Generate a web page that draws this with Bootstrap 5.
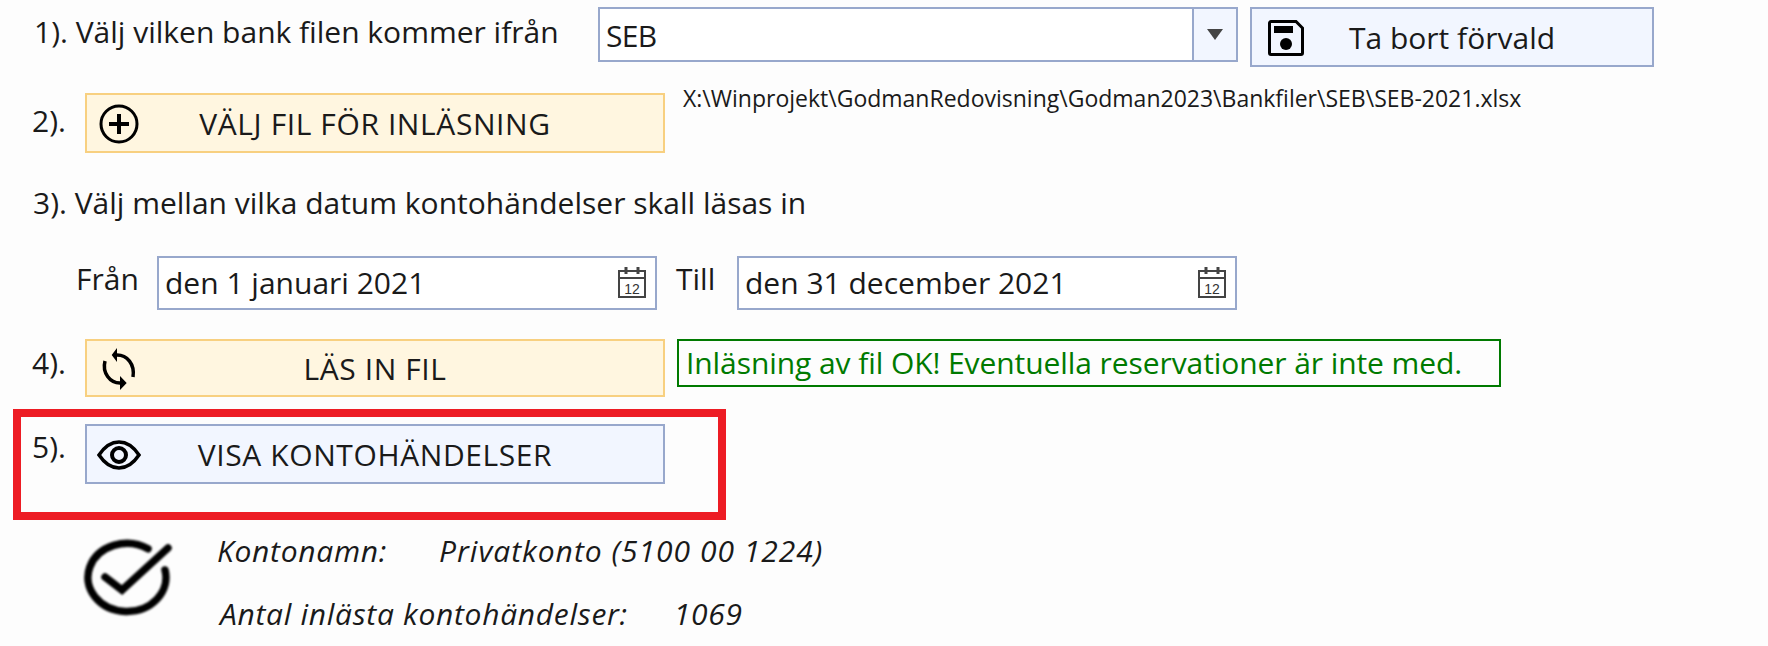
<!DOCTYPE html>
<html lang="sv">
<head>
    <meta charset="UTF-8">
    <meta name="viewport" content="width=device-width, initial-scale=1.0">
    <title>Inläsning av bankfil</title>
    <link href="https://cdn.jsdelivr.net/npm/bootstrap@5.3.3/dist/css/bootstrap.min.css" rel="stylesheet">
    <style>
        body {
            background-color: #fdfdfd;
            color: #1a1a1a;
            font-family: "Open Sans", "Liberation Sans", sans-serif;
            font-size: 30px;
            line-height: 36px;
            overflow: hidden;
        }
        .page-wrap { padding-top: 7px; width: 1768px; height: 646px; }

        .step-label { width: 85px; padding-left: 32px; flex: none; }
        .blue-box { border: 2px solid #98a8cc; border-radius: 0; }

        .action-btn {
            display: grid;
            grid-template-columns: 1fr auto 1fr;
            align-items: center;
            width: 580px;
            height: 60px;
            padding: 2px 12px 0;
            border-width: 2px;
            border-style: solid;
            border-radius: 0;
            font-size: 30px;
            line-height: 36px;
            color: #1a1a1a;
        }
        .action-btn svg { justify-self: start; display: block; margin-left: -2px; }
        .btn-yellow { background-color: #fff6e0; border-color: #f8d080; }
        .btn-blue { background-color: #f2f6ff; border-color: #98a8cc; }
        .btn-small-row { height: 58px; }
        .caps-text { letter-spacing: 0.6px; }

        .row-bank { height: 60px; }
        .bank-title { width: 598px; padding-left: 34px; padding-top: 7px; flex: none; }
        .bank-combo { width: 640px; height: 55px; flex: none; background: #fff; }
        .bank-value { flex: 1; padding: 9px 6px 0; letter-spacing: -0.7px; }
        .bank-arrow {
            width: 44px;
            background: #f2f6ff;
            border-left: 2px solid #98a8cc;
            display: flex;
            align-items: center;
            justify-content: center;
        }
        .btn-remove { width: 404px; margin-left: 12px; }
        .action-btn.btn-remove svg { margin-left: 4px; }

        .row-file { margin-top: 26px; height: 60px; }
        .row-file .step-label { margin-top: -5px; }
        .file-path { margin-left: 18px; font-size: 23px; line-height: 26px; margin-top: -8px; }

        .row-title { margin-top: 32px; padding-left: 33px; height: 36px; }

        .row-dates { margin-top: 35px; padding-left: 76px; height: 54px; }
        .date-label { width: 81px; flex: none; margin-top: 5px; }
        .date-label-till { width: 61px; margin-left: 19px; }
        .date-box { width: 500px; height: 54px; background: #fff; padding: 7px 9px 0 6px; flex: none; }
        .cal-icon { margin-top: 2px; }

        .row-read { margin-top: 29px; height: 58px; }
        .row-read .step-label { margin-top: 6px; }
        .status-box {
            margin-left: 12px;
            width: 824px;
            height: 48px;
            border: 2px solid #007a00;
            color: #007a00;
            padding-left: 7px;
            line-height: 44px;
            letter-spacing: -0.08px;
        }

        .red-frame {
            margin-top: 12px;
            margin-left: 13px;
            width: 713px;
            height: 111px;
            border: 8px solid #ed1c24;
            padding-top: 7px;
        }
        .red-frame .step-label { width: 64px; padding-left: 11px; margin-top: 5px; }

        .result-wrap { margin-top: 18px; padding-left: 83px; }
        .result-icon { filter: blur(0.8px); flex: none; }
        .result-lines { font-style: italic; letter-spacing: 0.7px; margin-left: 44px; margin-top: -5px; }
        .result-key { width: 222px; flex: none; }
        .result-value { letter-spacing: 1px; }
        .result-count { margin-left: 46px; }
        .result-line-two { margin-top: 27px; margin-left: 3px; }
    </style>
</head>
<body>
<div class="page-wrap">

    <!-- 1 -->
    <div class="d-flex row-bank">
        <div class="bank-title">1). Välj vilken bank filen kommer ifrån</div>
        <div class="d-flex bank-combo blue-box">
            <div class="bank-value">SEB</div>
            <div class="bank-arrow">
                <svg width="18" height="13" viewBox="0 0 18 13"><path d="M1 1h16L9 12z" fill="#444"/></svg>
            </div>
        </div>
        <button type="button" class="btn action-btn btn-blue btn-remove">
            <svg width="36" height="36" viewBox="0 0 36 36">
                <path d="M3 1.5h25l6.500 6.500v25a1.500 1.500 0 0 1-1.500 1.500H3A1.500 1.500 0 0 1 1.500 33V3A1.500 1.500 0 0 1 3 1.500z" fill="none" stroke="#000" stroke-width="3"/>
                <rect x="6" y="6" width="19" height="7" fill="#000"/>
                <circle cx="18" cy="24" r="6" fill="#000"/>
            </svg>
            <span>Ta bort förvald</span>
        </button>
    </div>

    <!-- 2 -->
    <div class="d-flex row-file">
        <div class="step-label align-self-center">2).</div>
        <button type="button" class="btn action-btn btn-yellow">
            <svg width="44" height="40" viewBox="0 0 44 40">
                <circle cx="22" cy="20" r="18" fill="none" stroke="#000" stroke-width="3"/>
                <path d="M12 20h20M22 10v20" stroke="#000" stroke-width="4" fill="none"/>
            </svg>
            <span class="caps-text">VÄLJ FIL FÖR INLÄSNING</span>
        </button>
        <div class="file-path">X:\Winprojekt\GodmanRedovisning\Godman2023\Bankfiler\SEB\SEB-2021.xlsx</div>
    </div>

    <!-- 3 -->
    <div class="row-title">3). Välj mellan vilka datum kontohändelser skall läsas in</div>

    <div class="d-flex row-dates">
        <div class="date-label">Från</div>
        <div class="d-flex justify-content-between align-items-start date-box blue-box">
            <span>den 1 januari 2021</span>
            <svg class="cal-icon" width="28" height="31" viewBox="0 0 28 31">
                <path d="M1 4h26v26H1zM1 11h26" fill="none" stroke="#444" stroke-width="2"/>
                <path d="M8 0v7M20 0v7" stroke="#444" stroke-width="3"/>
                <text x="14" y="27" text-anchor="middle" font-size="14" font-family="Liberation Sans" fill="#333">12</text>
            </svg>
        </div>
        <div class="date-label date-label-till">Till</div>
        <div class="d-flex justify-content-between align-items-start date-box blue-box">
            <span>den 31 december 2021</span>
            <svg class="cal-icon" width="28" height="31" viewBox="0 0 28 31">
                <path d="M1 4h26v26H1zM1 11h26" fill="none" stroke="#444" stroke-width="2"/>
                <path d="M8 0v7M20 0v7" stroke="#444" stroke-width="3"/>
                <text x="14" y="27" text-anchor="middle" font-size="14" font-family="Liberation Sans" fill="#333">12</text>
            </svg>
        </div>
    </div>

    <!-- 4 -->
    <div class="d-flex row-read">
        <div class="step-label">4).</div>
        <button type="button" class="btn action-btn btn-yellow btn-small-row">
            <svg width="44" height="42" viewBox="0 0 44 42">
                <path d="M20 7C30 7 38 16 36 29M23 35C13 35 5 25 8 13" fill="none" stroke="#000" stroke-width="3.500"/>
                <path d="M14.700 7L20 0v14zM29.700 35L23 28v14z" fill="#000"/>
            </svg>
            <span class="caps-text">LÄS IN FIL</span>
        </button>
        <div class="status-box">Inläsning av fil OK! Eventuella reservationer är inte med.</div>
    </div>

    <!-- 5 -->
    <div class="d-flex red-frame">
        <div class="step-label">5).</div>
        <button type="button" class="btn action-btn btn-blue">
            <svg width="44" height="30" viewBox="0 0 44 30">
                <path d="M2 15C8 6 14 2 22 2s14 4 20 13c-6 9-12 13-20 13S8 24 2 15z" fill="none" stroke="#000" stroke-width="3.500"/>
                <circle cx="22" cy="15" r="7" fill="none" stroke="#000" stroke-width="4"/>
            </svg>
            <span class="caps-text">VISA KONTOHÄNDELSER</span>
        </button>
    </div>

    <!-- resultat -->
    <div class="d-flex result-wrap">
        <svg class="result-icon" width="90" height="80" viewBox="0 0 90 80">
            <path d="M65 10.800A39 34 0 1 0 82 32" fill="none" stroke="#000" stroke-width="7.500" stroke-linecap="round"/>
            <path d="M22 39l17 13L85 10" fill="none" stroke="#000" stroke-width="7.500" stroke-linecap="round"/>
        </svg>
        <div class="result-lines">
            <div class="d-flex">
                <div class="result-key">Kontonamn:</div>
                <div class="result-value">Privatkonto (5100 00 1224)</div>
            </div>
            <div class="d-flex result-line-two">
                <div>Antal inlästa kontohändelser:</div>
                <div class="result-count">1069</div>
            </div>
        </div>
    </div>
</div>
<script src="https://cdn.jsdelivr.net/npm/bootstrap@5.3.3/dist/js/bootstrap.bundle.min.js"></script>
</body>
</html>
